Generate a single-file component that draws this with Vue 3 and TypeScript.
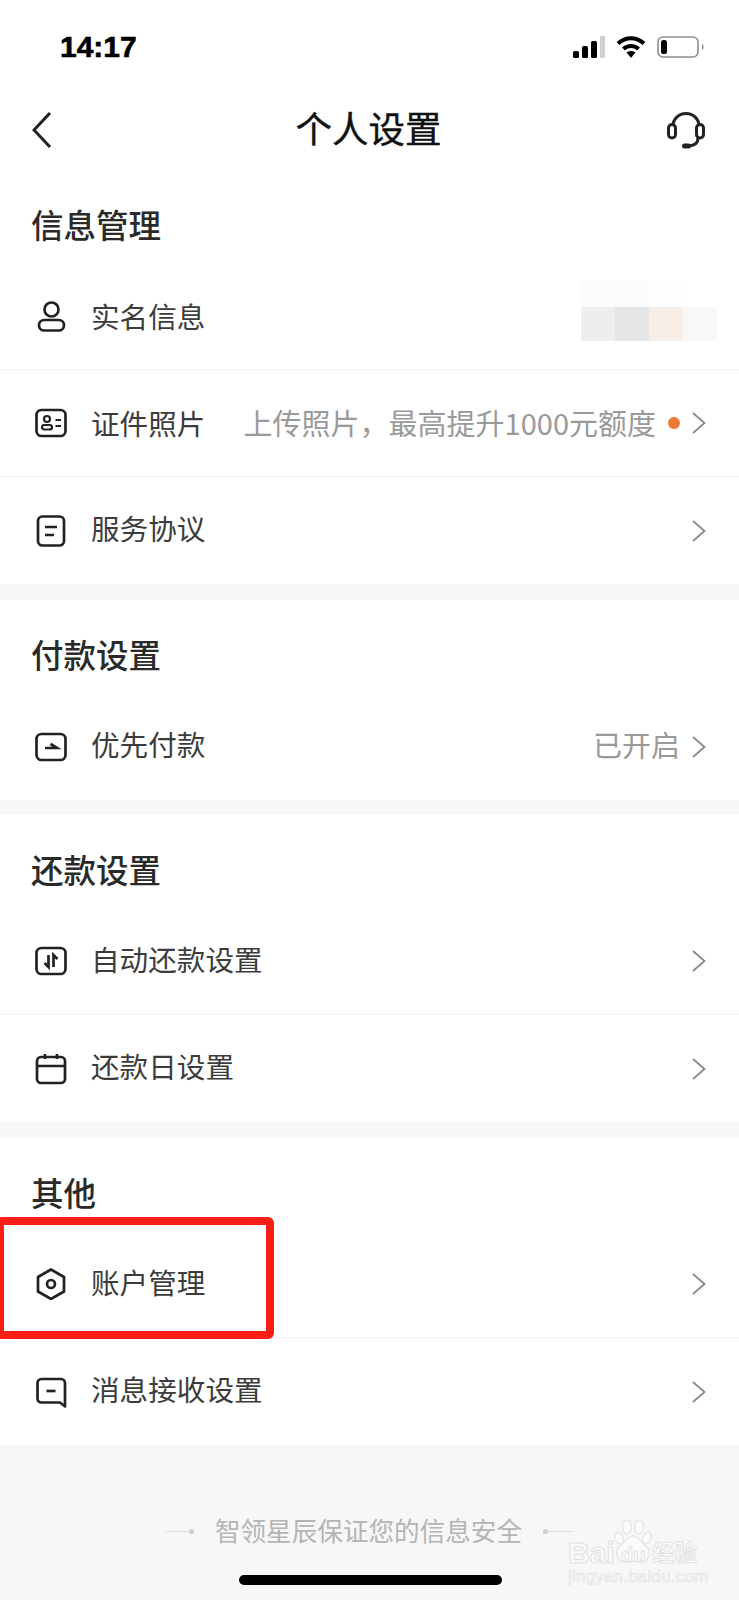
<script setup lang="ts">
interface Row {
  icon: string
  label: string
  hint?: string
  dot?: boolean
  mosaic?: boolean
  noArrow?: boolean
}

interface Section {
  title: string
  rows: Row[]
}

const sections: Section[] = [
  {
    title: '信息管理',
    rows: [
      { icon: 'person', label: '实名信息', mosaic: true, noArrow: true },
      { icon: 'card', label: '证件照片', hint: '上传照片，最高提升1000元额度', dot: true },
      { icon: 'doc', label: '服务协议' },
    ],
  },
  {
    title: '付款设置',
    rows: [{ icon: 'pay', label: '优先付款', hint: '已开启' }],
  },
  {
    title: '还款设置',
    rows: [
      { icon: 'auto', label: '自动还款设置' },
      { icon: 'calendar', label: '还款日设置' },
    ],
  },
  {
    title: '其他',
    rows: [
      { icon: 'hex', label: '账户管理' },
      { icon: 'msg', label: '消息接收设置' },
    ],
  },
]

const mosaicCells = ['#fcfcfc', '#fbfbfb', '#fefefe', '#ffffff', '#eeeeee', '#e6e6e6', '#f7eee8', '#f8f8f8']
</script>

<template>
  <div class="page">
    <div class="status">
      <span class="time">14:17</span>
      <div class="status-icons">
        <svg width="32" height="22" viewBox="0 0 32 22">
          <rect x="0" y="15" width="6" height="7" rx="1.5" fill="#000" />
          <rect x="9" y="10" width="6" height="12" rx="1.5" fill="#000" />
          <rect x="18" y="5" width="6" height="17" rx="1.5" fill="#000" />
          <rect x="27" y="0" width="5" height="22" rx="1" fill="#cfcfcf" />
        </svg>
        <svg width="30" height="22" viewBox="0 0 30 22">
          <path d="M2 7.5C9.5 .5 20.5 .5 28 7.5" fill="none" stroke="#000" stroke-width="4" />
          <path d="M7.5 13C11.5 9 18.5 9 22.5 13" fill="none" stroke="#000" stroke-width="4" />
          <path d="M10.5 16.5L15 22l4.5-5.500C17 14.500 13 14.500 10.500 16.500Z" fill="#000" />
        </svg>
        <svg class="battery" width="48" height="22" viewBox="0 0 48 22">
          <rect x="1" y="1" width="40" height="20" rx="5" fill="none" stroke="#8e8e8e" stroke-width="1.600" />
          <rect x="4" y="4" width="6" height="14" rx="2.500" fill="#000" />
          <path d="M45 8c2 .5 2 5.500 0 6Z" fill="#8e8e8e" />
        </svg>
      </div>
    </div>

    <header class="nav">
      <svg class="back" width="20" height="36" viewBox="0 0 20 36">
        <path d="M18 1L2 18l16 17" fill="none" stroke="#222" stroke-width="3" />
      </svg>
      <h1>个人设置</h1>
      <svg class="service" width="38" height="38" viewBox="0 0 38 38" fill="none" stroke="#222" stroke-width="3">
        <path d="M6 14A13 12.500 0 0 1 32 14" />
        <rect x="1.500" y="12.500" width="7" height="13.500" rx="3.500" />
        <rect x="29.500" y="12.500" width="7" height="13.500" rx="3.500" />
        <path d="M31 26c0 5-3 7.500-9 8" />
        <rect x="15" y="31.500" width="9" height="5" rx="2.500" fill="#222" stroke="none" />
      </svg>
    </header>

    <section v-for="section in sections" :key="section.title" class="section">
      <h2>{{ section.title }}</h2>
      <div v-for="row in section.rows" :key="row.label" class="row">
        <svg class="row-icon" width="32" height="32" viewBox="0 0 32 32" fill="none" stroke="#222" stroke-width="2.700">
          <template v-if="row.icon === 'person'">
            <circle cx="16.500" cy="9.500" r="7" />
            <rect x="4" y="20" width="25" height="10.500" rx="5.250" />
          </template>
          <template v-else-if="row.icon === 'card'">
            <rect x="1.500" y="3" width="29" height="26" rx="5" />
            <circle cx="12" cy="12" r="3" stroke-width="2.200" />
            <rect x="7" y="18" width="10" height="4.500" rx="2.250" stroke-width="2.200" />
            <path d="M20.500 13H26M20.500 19H26" stroke-width="2.200" />
          </template>
          <template v-else-if="row.icon === 'doc'">
            <rect x="3" y="1.500" width="26" height="29" rx="4.500" />
            <path d="M10 12H22M10 20H19" />
          </template>
          <template v-else-if="row.icon === 'pay'">
            <rect x="1.500" y="3" width="29" height="26" rx="5" />
            <path d="M10 17H22L15.500 13" />
          </template>
          <template v-else-if="row.icon === 'auto'">
            <rect x="1.500" y="3" width="29" height="26" rx="5" />
            <path d="M13.500 10V22L9.500 18M18.500 22V10L22.500 14" />
          </template>
          <template v-else-if="row.icon === 'calendar'">
            <rect x="2" y="4" width="28" height="26" rx="4" />
            <path d="M2 13H30M10 1V6M22 1V6" />
          </template>
          <template v-else-if="row.icon === 'hex'">
            <path d="M16 1.500L29 9V23.500L16 31L3 23.500V9Z" stroke-linejoin="round" />
            <circle cx="16" cy="16" r="4" />
          </template>
          <template v-else>
            <path d="M6.500 3H26a4 4 0 0 1 4 4V30.500L25 26.500H6.500a4 4 0 0 1-4-4V7a4 4 0 0 1 4-4Z" stroke-linejoin="round" />
            <path d="M11.500 15H20.500" />
          </template>
        </svg>
        <span class="label">{{ row.label }}</span>
        <span class="spacer" />
        <div v-if="row.mosaic" class="mosaic">
          <i v-for="(c, i) in mosaicCells" :key="i" :style="{ background: c }" />
        </div>
        <span v-if="row.hint" class="hint">{{ row.hint }}</span>
        <i v-if="row.dot" class="dot" />
        <svg v-if="!row.noArrow" class="arrow" width="14" height="22" viewBox="0 0 14 22">
          <path d="M1 1L12.500 11L1 21" fill="none" stroke="#8a8a8a" stroke-width="1.800" />
        </svg>
      </div>
    </section>

    <footer class="foot">
      <span class="deco left" />
      <span>智领星辰保证您的信息安全</span>
      <span class="deco right" />
    </footer>

    <!-- annotation and screenshot overlays -->
    <div class="redbox" />
    <div class="watermark">
      <svg class="paw" width="40" height="46" viewBox="0 0 40 46" fill="#fbfbfb" stroke="#e2e2e2" stroke-width="1.200">
        <ellipse cx="6" cy="19" rx="4" ry="6" transform="rotate(-20 6 19)" />
        <ellipse cx="14" cy="8" rx="4.500" ry="7" />
        <ellipse cx="26" cy="8" rx="4.500" ry="7" />
        <ellipse cx="34" cy="19" rx="4" ry="6" transform="rotate(20 34 19)" />
        <path d="M20 17C26 17 28 24 33 27C39 32 36 43 28 43C24 43 22 42 20 42C18 42 16 43 12 43C4 43 1 32 7 27C12 24 14 17 20 17Z" />
      </svg>
      <b class="wm-bai">Bai</b>
      <b class="wm-du">du</b>
      <span class="wm-cn">经验</span>
      <span class="wm-url">jingyan.baidu.com</span>
    </div>
    <div class="home" />
  </div>
</template>

<style scoped>
.page {
  position: relative;
  height: 1600px;
  overflow: hidden;
  background: #f7f7f7;
  color: #222;
  font-family: "Noto Sans CJK SC", "Noto Sans", sans-serif;
}

.status {
  display: flex;
  align-items: center;
  justify-content: space-between;
  height: 90px;
  padding: 2px 34px 0 60px;
  background: #fff;
}

.time {
  font-family: "Liberation Sans", sans-serif;
  font-size: 30px;
  font-weight: 700;
  color: #000;
  -webkit-text-stroke: 0.6px #000;
}

.status-icons {
  display: flex;
  align-items: center;
  gap: 11px;
}

.nav {
  display: grid;
  grid-template-columns: 1fr auto 1fr;
  align-items: center;
  height: 78px;
  padding: 0 34px 0 32px;
  background: #fff;
}

.back {
  margin-bottom: 2px;
}

.service {
  justify-self: end;
}

.nav h1 {
  margin: 0 0 6px;
  font-size: 36.500px;
  font-weight: 400;
  line-height: 50px;
  color: #111;
  -webkit-text-stroke: 0.4px #111;
}

.section {
  margin-bottom: 16px;
  background: #fff;
}

.section:nth-of-type(2) {
  margin-bottom: 15px;
}

.section h2 {
  box-sizing: border-box;
  height: 93px;
  margin: 0;
  padding: 32px 0 0 31px;
  font-size: 32.500px;
  font-weight: 500;
  line-height: 44px;
  color: #2a2a2a;
}

.row {
  box-sizing: border-box;
  display: flex;
  align-items: center;
  height: 107px;
  padding: 0 33px 0 35px;
  border-bottom: 1px solid #f2f2f2;
}

.row:last-child {
  border-bottom: none;
}

.row-icon {
  flex: none;
  margin-right: 24px;
}

.label {
  padding-bottom: 6px;
  font-size: 28.600px;
  color: #3c3c3c;
}

.spacer {
  flex: 1;
}

.hint {
  padding-bottom: 6px;
  font-size: 29px;
  color: #9a9a9a;
}

.section:first-of-type .row:not(:last-child) .label,
.section:first-of-type .row:not(:last-child) .hint {
  padding-bottom: 2px;
}

.dot {
  width: 12px;
  height: 12px;
  margin-left: 12px;
  border-radius: 50%;
  background: #ec7a35;
}

.arrow {
  flex: none;
  margin-left: 12px;
}

.mosaic {
  display: grid;
  grid-template-columns: repeat(4, 34px);
  grid-template-rows: 26px 34px;
  margin: 0 -11px 11px 0;
}

.foot {
  display: flex;
  align-items: center;
  justify-content: center;
  gap: 21px;
  padding-top: 51px;
  margin-left: -2px;
  font-size: 25.600px;
  line-height: 36px;
  color: #b4b4b4;
}

.foot span:nth-child(2) {
  padding-bottom: 2px;
}

.deco {
  position: relative;
  width: 29px;
  height: 1px;
  background: #dcdcdc;
}

.deco::after {
  content: "";
  position: absolute;
  top: -2px;
  width: 5px;
  height: 5px;
  border-radius: 50%;
  background: #cfcfcf;
}

.deco.left::after {
  right: 0;
}

.deco.right::after {
  left: 0;
}

.redbox {
  position: absolute;
  left: -4px;
  top: 1217px;
  box-sizing: border-box;
  width: 278px;
  height: 122px;
  border: 8px solid #fa1e16;
  border-radius: 6px;
}

.home {
  position: absolute;
  left: 239px;
  top: 1575px;
  width: 263px;
  height: 10px;
  border-radius: 5px;
  background: #000;
}

.watermark {
  position: absolute;
  left: 566px;
  top: 1518px;
  width: 136px;
  height: 68px;
  font-family: "Liberation Sans", sans-serif;
  color: #fbfbfb;
  white-space: nowrap;
}

.paw {
  position: absolute;
  left: 47px;
  top: 1px;
}

.wm-bai {
  position: absolute;
  left: 2px;
  top: 20px;
  font-size: 30px;
  line-height: 30px;
  -webkit-text-stroke: 1px #e0e0e0;
}

.wm-du {
  position: absolute;
  left: 55px;
  top: 26px;
  font-size: 20px;
  line-height: 22px;
  -webkit-text-stroke: 0.8px #e0e0e0;
}

.wm-cn {
  position: absolute;
  left: 86px;
  top: 17px;
  font-family: "Noto Sans CJK SC", sans-serif;
  font-size: 22.500px;
  font-weight: 700;
  line-height: 32px;
  -webkit-text-stroke: 0.8px #e0e0e0;
}

.wm-url {
  position: absolute;
  left: 2px;
  top: 49px;
  font-size: 17px;
  line-height: 20px;
  letter-spacing: 0.2px;
  -webkit-text-stroke: 0.7px #e2e2e2;
}
</style>

<style>
body {
  background: #f7f7f7;
}
</style>
